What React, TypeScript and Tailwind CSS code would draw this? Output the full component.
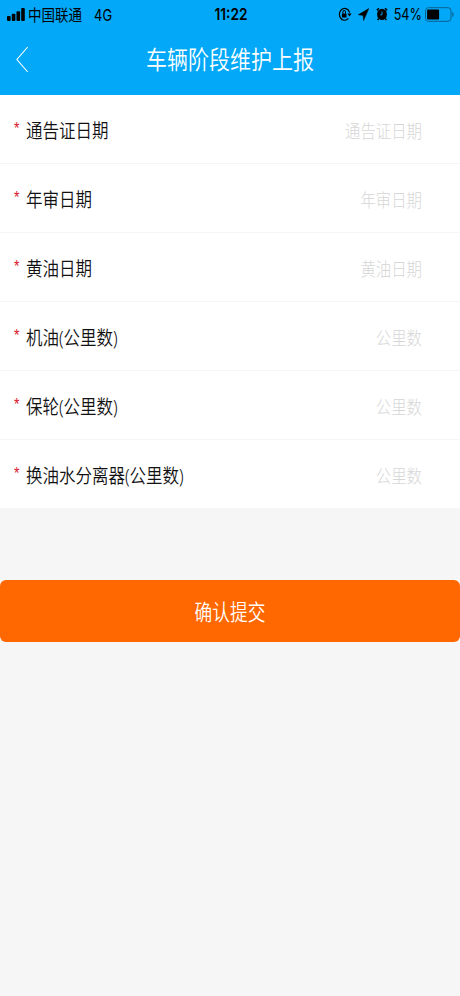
import React from "react";

const fields = [
  { label: "通告证日期", hint: "通告证日期" },
  { label: "年审日期", hint: "年审日期" },
  { label: "黄油日期", hint: "黄油日期" },
  { label: "机油(公里数)", hint: "公里数" },
  { label: "保轮(公里数)", hint: "公里数" },
  { label: "换油水分离器(公里数)", hint: "公里数" },
];

function StatusBar() {
  return (
    <div className="flex h-[29px] items-center text-black">
      <div className="flex flex-1 items-center pl-[7px]">
        <svg width="18" height="13" viewBox="0 0 18 13" fill="currentColor">
          <rect x="0" y="8" width="3.6" height="5" rx="1" />
          <rect x="4.8" y="5.8" width="3.6" height="7.2" rx="1" />
          <rect x="9.5" y="3.2" width="3.6" height="9.8" rx="1" />
          <rect x="14.2" y="0" width="3.6" height="13" rx="1" />
        </svg>
        <span className="ml-[3px] mt-[2px] scale-y-[1.2] text-[13.5px] leading-none">中国联通</span>
        <span className="ml-[12px] mt-px scale-y-[1.25] font-[Inter,sans-serif] text-[13px] leading-none">4G</span>
      </div>
      <span className="mt-[1px] scale-y-[1.2] font-[Inter,sans-serif] text-[13.7px] font-semibold leading-none">11:22</span>
      <div className="flex flex-1 items-center justify-end pr-[5px]">
        <svg className="-mt-[1px]" width="14" height="14" viewBox="0 0 14 14" fill="none" stroke="currentColor" strokeWidth="1.2">
          <path d="M10.4 11.4A5.2 5.9 0 1 1 11.6 5.6" />
          <path d="M9.4 6.4h4.2l-2.1 3z" fill="currentColor" stroke="none" />
          <rect x="3.9" y="6.4" width="4.6" height="4" rx=".5" fill="currentColor" stroke="none" />
          <path d="M4.9 6.6V5a1.3 1.6 0 0 1 2.6 0v1.6" strokeWidth="1" />
        </svg>
        <svg className="ml-[6px] -mt-[1px]" width="11" height="13" viewBox="0 0 11 13" fill="currentColor">
          <path d="M10.8.5.3 6.7l4.9.7.4 5.2z" stroke="currentColor" strokeWidth=".5" />
        </svg>
        <svg className="ml-[7px] -mt-[2px]" width="12" height="14" viewBox="0 0 12 14">
          <ellipse cx="6" cy="7.4" rx="4.9" ry="5.7" fill="currentColor" />
          <path d="M.8 3.3 3 1.2M11.2 3.3 9 1.2M2.6 11.5l-.9 1.6M9.4 11.5l.9 1.6" stroke="currentColor" strokeWidth="1.5" />
          <path d="M6 4.4v3.5H4.2" fill="none" stroke="#03a9f8" strokeWidth=".9" />
        </svg>
        <span className="ml-[6px] mt-[1px] scale-y-[1.25] font-[Inter,sans-serif] text-[12.7px] leading-none">54%</span>
        <svg className="ml-[3px] -mt-[1px]" width="30" height="15" viewBox="0 0 30 15">
          <rect x=".5" y=".7" width="25.5" height="13.6" rx="3" fill="none" stroke="#08608e" />
          <rect x="2.1" y="2.6" width="12" height="9.8" rx="1" fill="currentColor" />
          <path d="M27.3 5c1.8.6 1.8 4.4 0 5z" fill="#08608e" />
        </svg>
      </div>
    </div>
  );
}

export default function App() {
  return (
    <div className="min-h-[996px] w-[460px] overflow-hidden bg-[#f6f6f6] font-['Liberation_Sans','Noto_Sans_CJK_SC',sans-serif]">
      <header className="h-[95px] bg-[#03a9f8]">
        <StatusBar />
        <div className="grid h-[61px] grid-cols-[60px_1fr_60px] items-center">
          <svg className="ml-[16px]" width="13" height="27" viewBox="0 0 13 27" fill="none" stroke="white" strokeWidth="1.1">
            <path d="M11.7 1 .9 13.5 11.7 26" />
          </svg>
          <h1 className="-mt-[3px] scale-y-[1.2] text-center font-['Noto_Sans_CJK_SC',sans-serif] text-[21px] font-[350] leading-none text-white">车辆阶段维护上报</h1>
        </div>
      </header>
      <main>
        <div className="bg-white">
          {fields.map((field) => (
            <div key={field.label} className="flex h-[69px] items-center justify-between border-b border-[#f5f5f5] pl-[14px] pr-[38px]">
              <div className="flex items-center pt-[4px]">
                <span className="-mt-[7px] w-[12px] scale-y-[1.2] text-[14px] leading-none text-[#d9182b]">*</span>
                <span className="scale-y-[1.2] font-['Noto_Sans','Noto_Sans_CJK_SC',sans-serif] text-[16.5px] font-[350] leading-none text-[#111]">{field.label}</span>
              </div>
              <span className="mt-[3px] scale-y-[1.2] font-['Noto_Sans_CJK_SC',sans-serif] text-[15.4px] font-light leading-none text-[#d6d6d6]">{field.hint}</span>
            </div>
          ))}
        </div>
        <button className="mt-[71px] flex h-[62px] w-full items-center justify-center rounded-md bg-[#ff6700] text-white">
          <span className="mt-[2px] scale-y-[1.2] font-['Noto_Sans_CJK_SC',sans-serif] text-[17.7px] font-[350] leading-none">确认提交</span>
        </button>
      </main>
    </div>
  );
}
